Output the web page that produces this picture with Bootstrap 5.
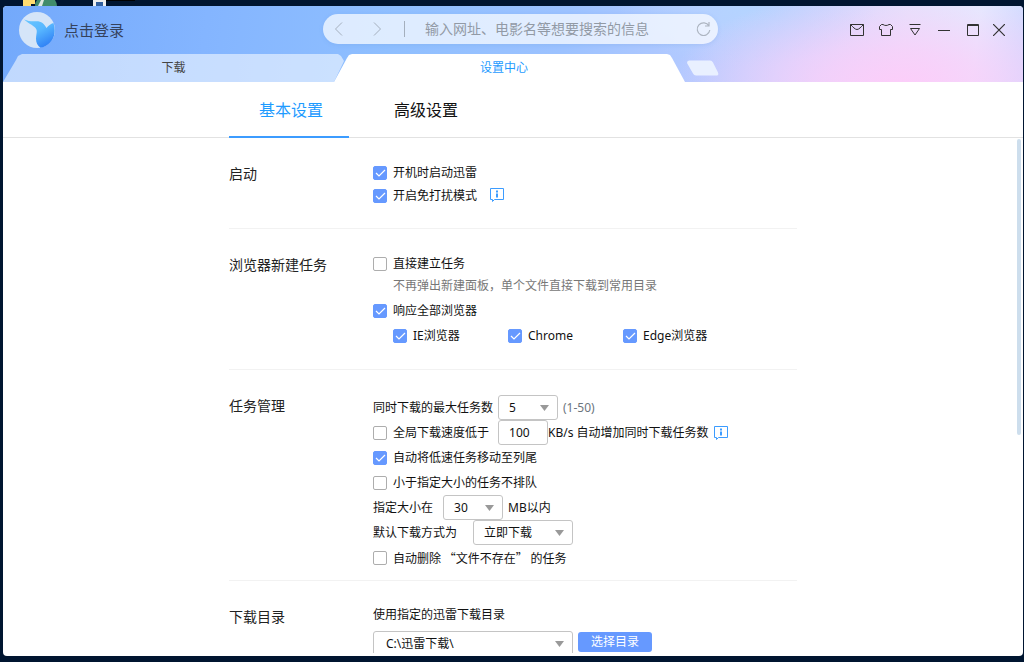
<!DOCTYPE html>
<html lang="zh-CN">
<head>
<meta charset="utf-8">
<meta name="viewport" content="width=device-width, initial-scale=1">
<title>设置中心</title>
<link href="https://cdn.jsdelivr.net/npm/bootstrap@5.3.0/dist/css/bootstrap.min.css" rel="stylesheet">
<style>
  :root { --accent: #6699ff; --sky: #1e9bff; --line: #e2e2e2; }
  body { font: 12px/20px "Noto Sans", "Noto Sans CJK SC", sans-serif; color: #111; background: #001530; height: 100vh; padding: 6px 1px 6px 3px; overflow: hidden; }
  .desk-icons { position: absolute; top: 0; left: 20px; }
  .app { height: 100%; border-radius: 4px; background: #fff; }
  .app-head { background:
      radial-gradient(ellipse 230px 100px at 88% 105%, #fccdf9 0, #fccdf9bb 35%, #fccdf900 100%),
      radial-gradient(ellipse 130px 60px at 73% 0, #b4d4ff 0, #b4d4ff00 100%),
      linear-gradient(98deg, #73a9fb 0, #84b5ff 20%, #8fbfff 38%, #9cc2ff 55%, #b4caff 68%, #ccd6ff 78%, #e2e4fc 88%, #e2ecff 95%, #cdd9ff 100%); }
  .head-row { display: grid; grid-template-columns: 320fr 395fr 305fr; height: 48px; }
  .login { font-size: 15px; color: #35425c; text-decoration: none; gap: 9px; padding-left: 16px; }
  .search { height: 30px; margin-top: 8px; border-radius: 15px; background: #ffffffb3; box-shadow: 0 1px 4px #6090d833; padding: 0 6px; }
  .search .split { width: 1px; height: 16px; margin-left: 11px; background: #a4afbd; }
  .search input { font-size: 14px; color: #777; background: none; border: 0; outline: 0; padding: 0; margin-left: 20px; min-width: 0; }
  .search input::placeholder { color: #929aa5; opacity: 1; }
  .plain { background: none; border: 0; padding: 0; display: flex; }
  .win-btns { gap: 11px; padding-right: 18px; }
  .tabs { height: 28px; gap: 2px; }
  .tab { font-size: 12px; line-height: 28px; text-align: center; text-decoration: none; border: 0; padding: 0; }
  .tab-idle { width: 341px; color: #444; background: #ffffff8c;
    clip-path: polygon(0 100%, 13px 6px, 15px 2px, 19px 0, calc(100% - 6px) 0, calc(100% - 3px) 2px, 100% 7px, calc(100% - 10px) 100%); }
  .tab-live { width: 351px; margin-left: -12px; padding-right: 11px; color: var(--sky); background: #fff;
    clip-path: polygon(0 100%, 13px 4px, 15px 1px, 18px 0, calc(100% - 18px) 0, calc(100% - 15px) 1px, calc(100% - 13px) 4px, 100% 100%); }
  .subnav { height: 56px; border-bottom: 1px solid var(--line); }
  .pane { width: 568px; max-width: 100%; }
  .subnav a { width: 120px; height: 56px; line-height: 56px; font-size: 16px; text-align: center; color: #111; text-decoration: none; }
  .subnav a.active { padding-left: 4px; color: var(--sky); border-bottom: 2px solid #3c9cff; }
  .subnav .pane { gap: 17px; }
  .view { min-height: 0; margin-bottom: 3px; }
  .thumb { position: absolute; top: 1px; right: 2px; width: 4px; height: 296px; background: #cddeed; border-radius: 2px; }
  .group { border-bottom: 1px solid #f2f2f2; }
  .group h2 { flex: 0 0 144px; font-size: 14px; font-weight: 400; line-height: 20px; margin: 0; padding-top: 26px; color: #222; }
  .group-body { padding: 23px 0 21px; }
  .group-body.tasks { padding: 25px 0 10px; }
  .group-body.folder { padding-top: 21px; }
  .line { display: flex; align-items: center; height: 25px; white-space: pre; }
  .line.tight { height: 23px; }
  .hint { line-height: 21px; padding: 0 0 2px 20px; color: #777; }
  .browsers { padding-left: 20px; }
  .browsers .opt { width: 115px; }
  .opt { display: flex; align-items: center; gap: 6px; }
  .opt .form-check-input { width: 14px; height: 14px; margin: 0; border: 1px solid #adadad; border-radius: 2px; box-shadow: none; }
  .opt .form-check-input:checked { background-color: var(--accent); border-color: var(--accent);
    background-size: 14px; background-image: url("data:image/svg+xml,%3Csvg xmlns='http://www.w3.org/2000/svg' viewBox='0 0 14 14'%3E%3Cpath d='M3 7l3 3 6-6' fill='none' stroke='white' stroke-width='1.2'/%3E%3C/svg%3E"); }
  .box { height: 25px; font-size: 12px; line-height: 16px; color: #111; border: 1px solid #c4c4c4; border-radius: 3px; padding: 0 0 0 10px; background-color: #fff; }
  select.box { appearance: none; background: #fff url("data:image/svg+xml,%3Csvg xmlns='http://www.w3.org/2000/svg' width='9' height='6'%3E%3Cpath d='M0 0h9L4.500 6z' fill='%23999'/%3E%3C/svg%3E") no-repeat right 8px center; }
  .w-num { width: 60px; margin: 0 5px; }
  .w-speed { width: 50px; margin-left: 9px; }
  .w-limit { margin-left: 10px; }
  .w-mode { width: 100px; }
  .w-dir { width: 200px; padding-left: 12px; margin-right: 5px; }
  .pick { width: 74px; height: 20px; line-height: 20px; font-size: 12px; padding: 0; border: 0; border-radius: 3px; color: #fff; background: var(--accent); }
  .cjk { font-family: "Noto Sans CJK SC", sans-serif; }
</style>
</head>
<body>
<svg class="desk-icons" width="120" height="6" aria-hidden="true"><path d="M3 0h12v4H11v2H3z" fill="#ffdc70"/><path d="M17 0h18q2 3 2 6H15q0-4 2-6z" fill="#408b6a"/><path d="M21 0h3l-2 6h-4z" fill="#dfe9e0"/><path d="M73 0h13v6H73z" fill="#eee"/><path d="M76 2h7v4h-7z" fill="#315f9d"/><path d="M86 0h29v1H86z" fill="#000"/></svg>
<div class="app d-flex flex-column overflow-hidden">
  <header class="app-head">
    <div class="head-row">
      <a href="#" class="login d-flex align-items-center">
        <svg width="36" height="36" viewBox="0 0 36 36" aria-hidden="true"><defs><linearGradient id="bird" x1="0" y1="0" x2=".6" y2="1"><stop offset="0" stop-color="#69c7ff"/><stop offset=".5" stop-color="#58b7ff"/><stop offset="1" stop-color="#3182f5"/></linearGradient></defs><circle cx="18" cy="18" r="18" fill="#d5e5f8"/><path d="M5 7.500c4 1.500 7 2 11 1.800 6-.5 9 2 11.500 6.700 2-2.500 4-4 7-5 3.500 11-1 21-10.500 24.300l-2.500.5c-3-2-4.500-5-4.500-9 0-4 1.500-7 .3-9.500C16 14 10 12 5 7.500z" fill="url(#bird)"/></svg>
        <span>点击登录</span>
      </a>
      <div class="search d-flex align-items-center">
        <button class="plain" aria-label="后退"><svg width="20" height="16" fill="none" stroke="#a4afbd"><path d="M13 1.500L6.500 8l6.500 6.500"/></svg></button>
        <button class="plain ms-4" aria-label="前进"><svg width="20" height="16" fill="none" stroke="#a4afbd"><path d="M2 1.500L8.500 8 2 14.500" transform="translate(-1)"/></svg></button>
        <span class="split"></span>
        <input type="text" class="flex-grow-1" placeholder="输入网址、电影名等想要搜索的信息" aria-label="搜索">
        <button class="plain" aria-label="刷新"><svg width="16" height="16" fill="none" stroke="#adb5c1" stroke-width="1.200"><path d="M13 5A6.300 6.300 0 1 0 13.800 9M13 1v4H9"/></svg></button>
      </div>
      <div class="win-btns d-flex align-items-center justify-content-end">
        <button class="plain" aria-label="消息"><svg width="18" height="18" fill="none" stroke="#333"><path d="M2.500 3.500h13v11h-13zM2.500 3.500C5 6 7 8.500 9 8.500S13 6 15.500 3.500"/></svg></button>
        <button class="plain" aria-label="皮肤"><svg width="18" height="18" fill="none" stroke="#333"><path d="M6 3.500c1.500 1.300 4.500 1.300 6 0h1.500l2 2v3h-2v6h-9v-6h-2v-3l2-2z"/></svg></button>
        <button class="plain" aria-label="菜单"><svg width="18" height="18" fill="none" stroke="#333"><path d="M3.500 3.500h11M4.500 7.500h9L9 14z"/></svg></button>
        <button class="plain" aria-label="最小化"><svg width="18" height="18" fill="none" stroke="#333"><path d="M3 9.500h12"/></svg></button>
        <button class="plain" aria-label="最大化"><svg width="18" height="18" fill="none" stroke="#333"><path d="M3.500 3.500h11v11h-11zM3 4.500h12"/></svg></button>
        <button class="plain" aria-label="关闭"><svg width="12" height="12" fill="none" stroke="#333" stroke-width="1.200"><path d="M0 0l12 12M12 0L0 12"/></svg></button>
      </div>
    </div>
    <nav class="tabs d-flex">
      <a href="#" class="tab tab-idle">下载</a>
      <a href="#" class="tab tab-live">设置中心</a>
      <button class="plain align-items-center" aria-label="新建标签"><svg width="32" height="16"><path d="M2 .5h21q2 0 3 2l5 10q1 3-1 3H9q-2 0-3-2L0 3Q0 .5 2 .5z" fill="#e9f0ff"/></svg></button>
    </nav>
  </header>
  <nav class="subnav flex-shrink-0">
    <div class="pane mx-auto d-flex">
      <a href="#" class="active">基本设置</a>
      <a href="#">高级设置</a>
    </div>
  </nav>
  <main class="view flex-grow-1 overflow-hidden position-relative">
    <div class="pane mx-auto">
      <section class="group d-flex">
        <h2>启动</h2>
        <div class="group-body">
          <div class="line tight"><label class="opt"><input type="checkbox" class="form-check-input" checked>开机时启动迅雷</label></div>
          <div class="line tight"><label class="opt"><input type="checkbox" class="form-check-input" checked>开启免打扰模式</label><svg class="ms-2 ps-1" width="19" height="15" viewBox="-1 0 15 15" fill="none" stroke="#3c9cff"><path d="M.5 .5h13v11h-9l-2 2v-2h-2z"/><path d="M7 2.500v2M7 5.500v4" stroke-width="2"/></svg></div>
        </div>
      </section>
      <section class="group d-flex">
        <h2>浏览器新建任务</h2>
        <div class="group-body">
          <div class="line tight"><label class="opt"><input type="checkbox" class="form-check-input">直接建立任务</label></div>
          <div class="hint">不再弹出新建面板，单个文件直接下载到常用目录</div>
          <div class="line"><label class="opt"><input type="checkbox" class="form-check-input" checked>响应全部浏览器</label></div>
          <div class="line browsers"><label class="opt"><input type="checkbox" class="form-check-input" checked>IE浏览器</label><label class="opt"><input type="checkbox" class="form-check-input" checked>Chrome</label><label class="opt"><input type="checkbox" class="form-check-input" checked>Edge浏览器</label></div>
        </div>
      </section>
      <section class="group d-flex">
        <h2>任务管理</h2>
        <div class="group-body tasks">
          <div class="line"><label for="maxTasks">同时下载的最大任务数</label><select id="maxTasks" class="box w-num"><option>5</option></select><span class="text-secondary">(1-50)</span></div>
          <div class="line"><label class="opt"><input type="checkbox" class="form-check-input">全局下载速度低于</label><input type="text" class="box w-speed" value="100" aria-label="速度"><span>KB/s 自动增加同时下载任务数</span><svg class="ms-1" width="15" height="15" viewBox="-1 0 15 15" fill="none" stroke="#3c9cff"><path d="M.5 1.500h13v11h-9l-2 2v-2h-2z"/><path d="M7 3.500v2M7 6.500v4" stroke-width="2"/></svg></div>
          <div class="line"><label class="opt"><input type="checkbox" class="form-check-input" checked>自动将低速任务移动至列尾</label></div>
          <div class="line"><label class="opt"><input type="checkbox" class="form-check-input">小于指定大小的任务不排队</label></div>
          <div class="line"><label for="sizeLimit">指定大小在</label><select id="sizeLimit" class="box w-num w-limit"><option>30</option></select><span>MB以内</span></div>
          <div class="line"><label for="mode">默认下载方式为</label><select id="mode" class="box w-mode ms-3"><option>立即下载</option></select></div>
          <div class="line"><label class="opt"><input type="checkbox" class="form-check-input"><span class="cjk">自动删除 “文件不存在” 的任务</span></label></div>
        </div>
      </section>
      <section class="group d-flex">
        <h2>下载目录</h2>
        <div class="group-body folder">
          <div class="line mb-1"><label for="dir">使用指定的迅雷下载目录</label></div>
          <div class="line"><select id="dir" class="box w-dir"><option>C:\迅雷下载\</option></select><button class="pick mb-1">选择目录</button></div>
        </div>
      </section>
    </div>
    <div class="thumb"></div>
  </main>
</div>
<script src="https://cdn.jsdelivr.net/npm/bootstrap@5.3.0/dist/js/bootstrap.bundle.min.js"></script>
</body>
</html>
